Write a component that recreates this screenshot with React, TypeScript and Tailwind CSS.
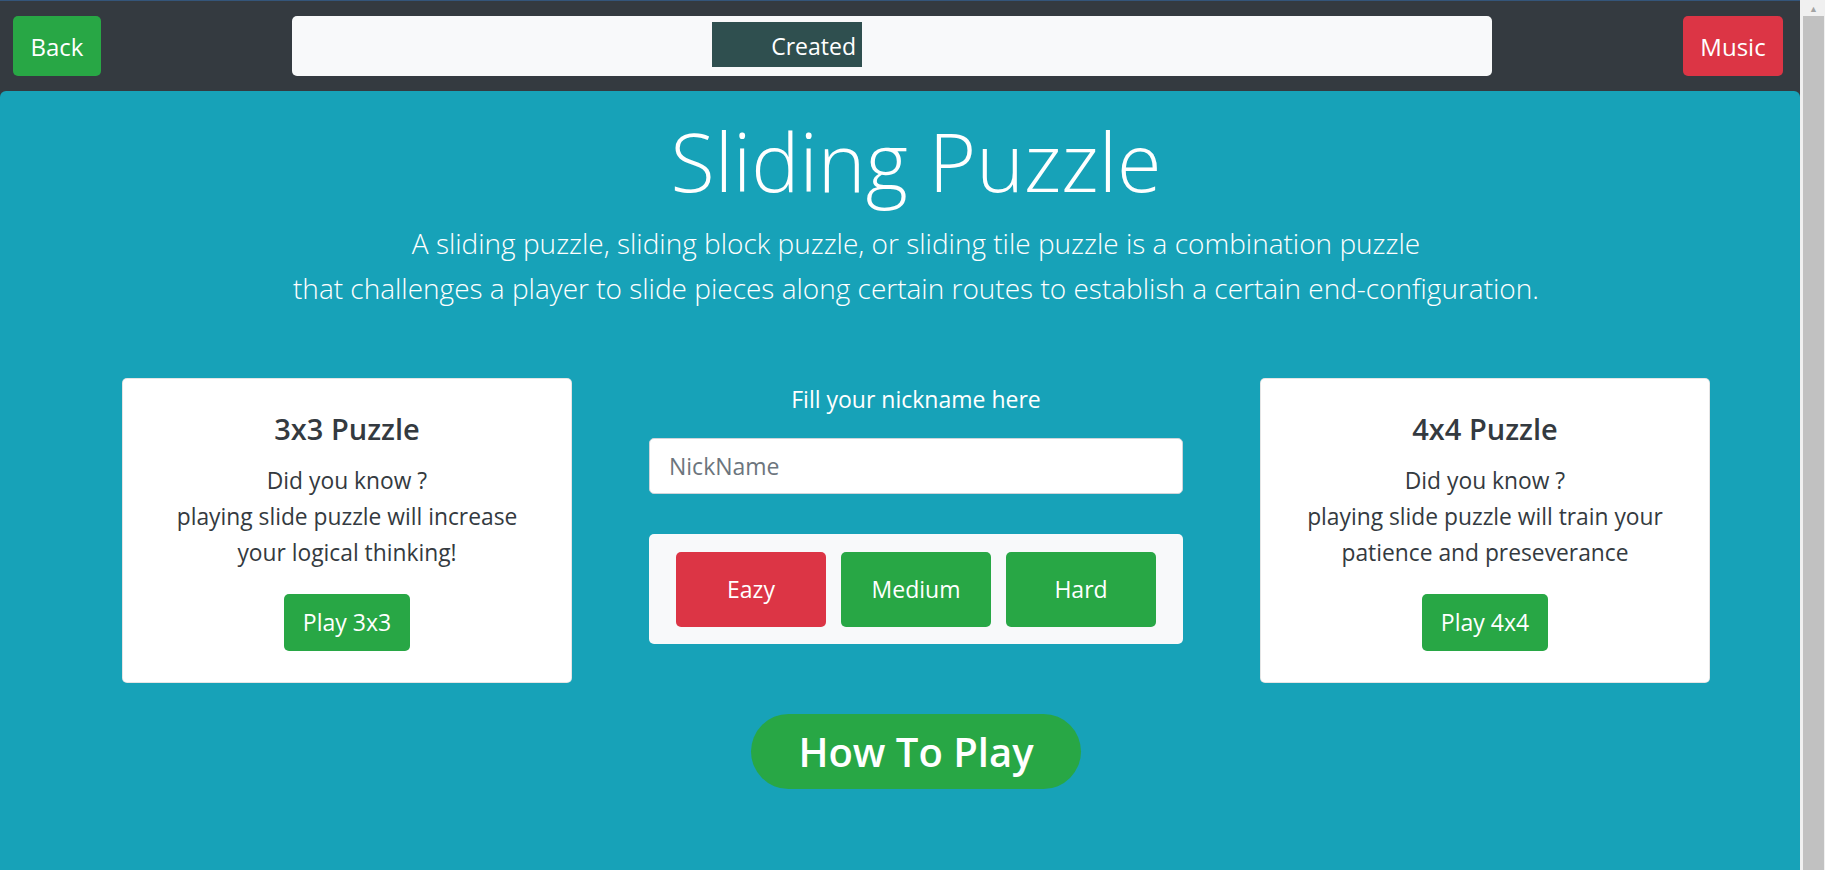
import React from "react";

const font = { fontFamily: '"Open Sans", "Noto Sans", sans-serif' };

function PuzzleCard({ title, lines, cta }: { title: string; lines: string[]; cta: string }) {
  return (
    <div className="w-[450px] h-[305px] bg-white rounded-[5px] border border-black/10 flex flex-col items-center pt-[30px] text-[#343a40]">
      <h4 className="text-[29px] font-semibold leading-[40px]">{title}</h4>
      <div className="mt-[14px] text-[22.8px] leading-[36px] text-center">
        {lines.map((l) => (
          <div key={l}>{l}</div>
        ))}
      </div>
      <button className="mt-[23px] w-[126px] h-[57px] rounded-[5px] bg-[#28a745] text-white text-[23px]">
        {cta}
      </button>
    </div>
  );
}

export default function App() {
  return (
    <div className="h-[870px] overflow-hidden flex bg-[#343a40]" style={font}>
      <div className="w-[1800px] flex flex-col border-t border-[#34557a]">
        {/* top bar */}
        <header className="h-[90px] flex items-start justify-between pt-[15px] pl-[13px] pr-[17px]">
          <button className="w-[88px] h-[60px] pt-[2px] rounded-[5px] bg-[#28a745] text-white text-[24px]">Back</button>
          <div className="w-[1200px] h-[60px] rounded-[5px] bg-[#f8f9fa] flex items-start pt-[6px] pl-[420px]">
            <div className="w-[150px] h-[45px] pt-[3px] bg-[#2f4f4f] text-white text-[23px] flex items-center justify-end pr-[6px]">
              Created
            </div>
          </div>
          <button className="w-[100px] h-[60px] pt-[2px] rounded-[5px] bg-[#dc3545] text-white text-[24px]">Music</button>
        </header>

        {/* jumbotron */}
        <main className="flex-1 rounded-t-[6px] bg-[#17a2b8] text-white pl-[32px]">
          <div className="flex flex-col items-center">
            <h1 className="mt-[16px] text-[81px] font-light leading-[108px]">Sliding Puzzle</h1>
            <p className="mt-[6px] text-[28px] font-light leading-[45px] text-center">
              A sliding puzzle, sliding block puzzle, or sliding tile puzzle is a combination puzzle
              <br />
              that challenges a player to slide pieces along certain routes to establish a certain end-configuration.
            </p>

            <div className="mt-[67px] flex items-start gap-[77px]">
              <PuzzleCard
                title="3x3 Puzzle"
                lines={["Did you know ?", "playing slide puzzle will increase", "your logical thinking!"]}
                cta="Play 3x3"
              />

              <div className="w-[534px] flex flex-col items-center">
                <h5 className="mt-[3px] text-[23px] leading-[36px]">Fill your nickname here</h5>
                <input
                  placeholder="NickName"
                  className="mt-[21px] w-full h-[56px] rounded-[5px] bg-white border border-[#ced4da] px-[19px] text-[23px] text-[#495057] placeholder:text-[#6c757d] outline-none"
                  style={font}
                />
                <div className="mt-[40px] w-full h-[110px] rounded-[5px] bg-[#f8f9fa] flex items-center justify-center gap-[15px]">
                  <button className="w-[150px] h-[75px] rounded-[5px] bg-[#dc3545] text-white text-[23px]">Eazy</button>
                  <button className="w-[150px] h-[75px] rounded-[5px] bg-[#28a745] text-white text-[23px]">Medium</button>
                  <button className="w-[150px] h-[75px] rounded-[5px] bg-[#28a745] text-white text-[23px]">Hard</button>
                </div>
              </div>

              <PuzzleCard
                title="4x4 Puzzle"
                lines={["Did you know ?", "playing slide puzzle will train your", "patience and preseverance"]}
                cta="Play 4x4"
              />
            </div>

            <button className="mt-[31px] w-[330px] h-[75px] rounded-full bg-[#28a745] text-white text-[40px] font-semibold">
              How To Play
            </button>
          </div>
        </main>
      </div>

      {/* scrollbar */}
      <div className="w-[25px] bg-[#f0f0f0] flex flex-col items-center pl-[2px]">
        <div className="h-[16px] flex items-center justify-center text-[#a3a3a3] text-[9px] leading-none">▲</div>
        <div className="flex-1 w-[21px] bg-[#c1c1c1]" />
      </div>
    </div>
  );
}
